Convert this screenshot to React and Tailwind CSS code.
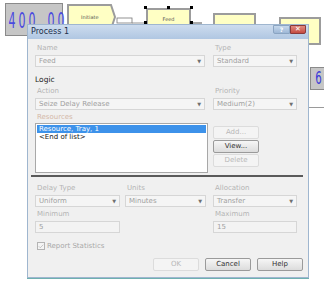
import { Check } from 'lucide-react'

const FONT = { fontFamily: 'Tahoma, "DejaVu Sans", "Liberation Sans", sans-serif' }

function Label({ children, className = '' }) {
  return <p className={`h-[8px] text-[7px] leading-[8px] text-[#b4b4b4] ${className}`}>{children}</p>
}

function Select({ value, className = '' }) {
  return (
    <div
      className={`flex h-[12px] items-center justify-between border border-[#d6d6d6] bg-[#f5f5f5] pl-[3px] pr-[3px] ${className}`}
    >
      <span className="text-[7px] leading-none text-[#a0a0a0]">{value}</span>
      <span className="text-[5px] leading-none text-[#707070]">▼</span>
    </div>
  )
}

function Field({ value, className = '' }) {
  return (
    <div className={`flex h-[12px] items-center border border-[#d6d6d6] bg-[#f3f3f3] pl-[3px] ${className}`}>
      <span className="text-[7px] leading-none text-[#a0a0a0]">{value}</span>
    </div>
  )
}

function Button({ children, active, className = '' }) {
  return (
    <div
      className={`flex h-[13px] w-[46px] items-center justify-center rounded-[2px] border text-[7px] leading-none ${
        active
          ? 'border-[#9a9a9a] bg-gradient-to-b from-[#f6f6f6] to-[#dcdcdc] text-[#303030]'
          : 'border-[#dcdcdc] bg-[#f4f4f4] text-[#b8b8b8]'
      } ${className}`}
    >
      {children}
    </div>
  )
}

function Block({ className, children }) {
  return (
    <div
      className={`absolute flex items-end justify-center border-2 border-[#9c9c9c] bg-[#ffffc4] text-[5px] text-[#555] ${className}`}
    >
      {children}
    </div>
  )
}

function Handle({ x, y }) {
  return <div className="absolute h-[3px] w-[3px] bg-black" style={{ left: x, top: y }} />
}

function Digit({ d, className = '' }) {
  return (
    <span className={`flex w-[9px] justify-center ${className}`}>
      <span className="inline-block scale-x-[0.5]">{d}</span>
    </span>
  )
}

export default function App() {
  return (
    <div className="relative h-[308px] w-[324px] overflow-hidden bg-white" style={FONT}>
      {/* diagram canvas behind the dialog */}
      <div className="absolute left-[5px] top-[3px] flex h-[33px] w-[58px] items-center border border-[#8a8a8a] bg-[#c6c6c6] pl-[1px] pt-[2px] text-[22px] leading-none text-[#4a4ae0]">
        <Digit d="4" />
        <Digit d="0" className="ml-[1px]" />
        <Digit d="0" className="ml-[1px]" />
        <Digit d="0" className="ml-[10px]" />
        <Digit d="0" className="ml-[1px]" />
      </div>

      <svg className="absolute left-[67px] top-[4px]" width="140" height="26" viewBox="0 0 140 26">
        <polygon points="1,1 44,1 48,13 44,25 1,25" fill="#ffffc4" stroke="#9c9c9c" strokeWidth="2" />
        <text x="14" y="15" fontSize="5" fill="#555">Initiate</text>
        <rect x="50" y="14" width="15" height="5" fill="#fff" stroke="#777" strokeWidth="0.8" />
        <line x1="65" y1="19" x2="79" y2="19" stroke="#777" strokeWidth="0.8" />
        <line x1="124" y1="19" x2="135" y2="19" stroke="#555" strokeWidth="1" />
      </svg>

      <Block className="left-[146px] top-[8px] h-[18px] w-[45px] pb-[1px]">Feed</Block>
      <Handle x={144} y={6} />
      <Handle x={167} y={6} />
      <Handle x={190} y={6} />
      <Handle x={144} y={21} />
      <Handle x={190} y={21} />
      <Block className="left-[213px] top-[13px] h-[14px] w-[43px]" />
      <Block className="left-[279px] top-[17px] h-[28px] w-[42px]" />
      <div className="absolute left-[310px] top-[67px] flex h-[23px] w-[16px] items-center justify-center border border-[#8a8a8a] bg-[#c6c6c6] text-[17px] leading-none text-[#3a3ad8]">
        <span className="inline-block scale-x-[0.6]">6</span>
      </div>
      <div className="absolute left-[308px] top-[107px] h-px w-[16px] bg-[#9a9a9a]" />

      {/* dialog window */}
      <div className="absolute left-[27px] top-[24px] flex h-[254px] w-[282px] flex-col border border-[#9fb6cf] bg-[#f0f0f0] shadow-[0_1px_0_#6fb0b0]">
        <div className="flex h-[14px] shrink-0 items-center justify-between bg-gradient-to-b from-[#cddcee] to-[#b0c7e2] pl-[3px] pr-[2px]">
          <span className="text-[8px] leading-none text-[#1c2f4a]">Process 1</span>
          <div className="flex h-[9px] self-start">
            <div className="flex w-[17px] items-center justify-center rounded-bl-[2px] border border-[#8aa4c2] bg-gradient-to-b from-[#c6d8ec] to-[#9db7d6] text-[6px] font-bold leading-none text-white">
              ?
            </div>
            <div className="flex w-[16px] items-center justify-center rounded-br-[2px] border border-[#8a3a3a] bg-gradient-to-b from-[#e08a80] to-[#c44a40] text-[7px] font-bold leading-none text-white">
              ✕
            </div>
          </div>
        </div>

        <div className="flex flex-col pl-[7px] pr-[10px]">
          <div className="mt-[5px] flex gap-[8px]">
            <Label className="w-[170px] pl-[2px]">Name</Label>
            <Label className="pl-[2px]">Type</Label>
          </div>
          <div className="mt-[3px] flex gap-[8px]">
            <Select value="Feed" className="w-[170px]" />
            <Select value="Standard" className="w-[84px]" />
          </div>

          <p className="mt-[9px] h-[8px] text-[7.5px] leading-[8px] text-[#222]">Logic</p>
          <div className="mt-[3px] flex gap-[8px]">
            <Label className="w-[170px] pl-[2px]">Action</Label>
            <Label className="pl-[2px]">Priority</Label>
          </div>
          <div className="mt-[3px] flex gap-[8px]">
            <Select value="Seize Delay Release" className="w-[170px]" />
            <Select value="Medium(2)" className="w-[84px]" />
          </div>

          <Label className="mt-[3px] pl-[2px] text-[#d4b8a8]">Resources</Label>
          <div className="mt-[2px] flex gap-[5px]">
            <div className="h-[50px] w-[173px] border border-[#a8a8a8] bg-white p-[1px]">
              <p className="h-[8px] bg-[#3d92ea] pl-[2px] text-[7px] leading-[8px] text-white">Resource, Tray, 1</p>
              <p className="h-[8px] pl-[2px] text-[7px] leading-[8px] text-[#111]">&lt;End of list&gt;</p>
            </div>
            <div className="flex flex-col gap-[1px] pt-[3px]">
              <Button>Add...</Button>
              <Button active>View...</Button>
              <Button>Delete</Button>
            </div>
          </div>

          <div className="-ml-[4px] mt-[2px] h-[2px] w-[272px] bg-[#5a5a5a]" />

          <div className="mt-[7px] flex">
            <Label className="w-[90px] pl-[2px]">Delay Type</Label>
            <Label className="w-[88px] pl-[2px]">Units</Label>
            <Label className="pl-[2px]">Allocation</Label>
          </div>
          <div className="mt-[3px] flex">
            <Select value="Uniform" className="mr-[5px] w-[85px]" />
            <Select value="Minutes" className="mr-[7px] w-[81px]" />
            <Select value="Transfer" className="w-[84px]" />
          </div>
          <div className="mt-[3px] flex">
            <Label className="w-[178px] pl-[2px]">Minimum</Label>
            <Label className="pl-[2px]">Maximum</Label>
          </div>
          <div className="mt-[3px] flex">
            <Field value="5" className="mr-[93px] w-[85px]" />
            <Field value="15" className="w-[84px]" />
          </div>

          <div className="mt-[9px] flex items-center gap-[2px] pl-[2px]">
            <div className="flex h-[8px] w-[8px] items-center justify-center border border-[#b4b4b4] bg-[#f4f4f4]">
              <Check size={7} strokeWidth={2} className="text-[#9a9a9a]" />
            </div>
            <span className="text-[7px] leading-none text-[#a8a8a8]">Report Statistics</span>
          </div>

          <div className="mt-[8px] flex justify-end gap-[6px]">
            <Button>OK</Button>
            <Button active>Cancel</Button>
            <Button active className="-mr-[5px]">Help</Button>
          </div>
        </div>
      </div>
    </div>
  )
}
